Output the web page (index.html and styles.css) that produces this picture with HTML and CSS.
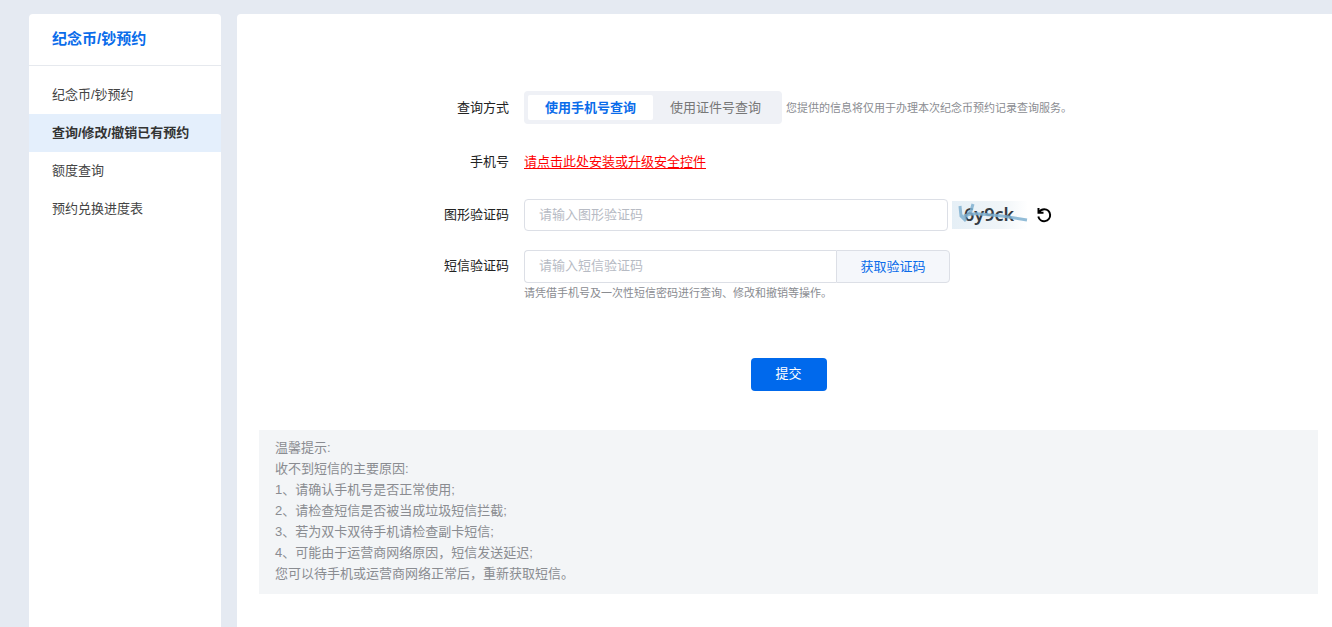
FILE: index.html
```html
<!DOCTYPE html>
<html lang="zh-CN">
<head>
<meta charset="utf-8">
<meta name="viewport" content="width=device-width, initial-scale=1">
<title>纪念币/钞预约</title>
<link rel="stylesheet" href="styles.css">
</head>
<body class="page">
<nav class="sidebar">
  <h1 class="sidebar-title">纪念币/钞预约</h1>
  <ul class="menu">
    <li><a class="menu-link" href="#book">纪念币/钞预约</a></li>
    <li><a class="menu-link is-active" href="#manage" aria-current="page">查询/修改/撤销已有预约</a></li>
    <li><a class="menu-link" href="#quota">额度查询</a></li>
    <li><a class="menu-link" href="#schedule">预约兑换进度表</a></li>
  </ul>
</nav>
<main class="content">
  <form class="query-form">
    <div class="row row-mode">
      <span class="label" id="mode-label">查询方式</span>
      <div class="field">
        <div class="segments" role="radiogroup" aria-labelledby="mode-label">
          <label class="segment"><input class="segment-input" type="radio" name="mode" checked><span class="segment-text">使用手机号查询</span></label>
          <label class="segment"><input class="segment-input" type="radio" name="mode"><span class="segment-text">使用证件号查询</span></label>
        </div>
        <span class="hint">您提供的信息将仅用于办理本次纪念币预约记录查询服务。</span>
      </div>
    </div>
    <div class="row row-phone">
      <span class="label">手机号</span>
      <div class="field"><a class="install-link" href="#install">请点击此处安装或升级安全控件</a></div>
    </div>
    <div class="row row-captcha">
      <label class="label" for="captcha">图形验证码</label>
      <div class="field">
        <input class="text-input" id="captcha" type="text" placeholder="请输入图形验证码">
        <svg class="captcha" viewBox="0 0 76 28" role="img" aria-label="图形验证码">
          <defs>
            <linearGradient id="fade"><stop offset="0" stop-color="#e5eff6"/><stop offset=".65" stop-color="#f0f5f8"/><stop offset="1" stop-color="#fff"/></linearGradient>
          </defs>
          <rect width="76" height="28" fill="url(#fade)"/>
          <text class="captcha-text" x="12" y="20">6y9ck</text>
          <path d="M8 5l1 10 5 5M21 3l-2 7-6 6M9 14l5 5M12 15q8-3 16-2l22 2 25 4" fill="none" stroke="#7fb0d0" stroke-width="3" opacity=".85"/>
        </svg>
        <button class="refresh" type="button" aria-label="刷新验证码">
          <svg class="refresh-icon" viewBox="0 0 16 16"><path d="M2.5 1v4.8h5M2.8 5.2C4.4 3.2 6 2.2 8.2 2.2a6 6 0 1 1-5.9 7.4" fill="none" stroke="#000" stroke-width="2"/></svg>
        </button>
      </div>
    </div>
    <div class="row row-sms">
      <label class="label" for="sms">短信验证码</label>
      <div class="sms-field">
        <div class="sms-group">
          <input class="text-input sms-input" id="sms" type="text" placeholder="请输入短信验证码">
          <button class="sms-button" type="button">获取验证码</button>
        </div>
        <p class="hint sms-hint">请凭借手机号及一次性短信密码进行查询、修改和撤销等操作。</p>
      </div>
    </div>
    <div class="actions"><button class="submit" type="submit">提交</button></div>
  </form>
  <section class="notice">
    <p>温馨提示:</p>
    <p>收不到短信的主要原因:</p>
    <p>1、请确认手机号是否正常使用;</p>
    <p>2、请检查短信是否被当成垃圾短信拦截;</p>
    <p>3、若为双卡双待手机请检查副卡短信;</p>
    <p>4、可能由于运营商网络原因，短信发送延迟;</p>
    <p>您可以待手机或运营商网络正常后，重新获取短信。</p>
  </section>
</main>
</body>
</html>
```

FILE: styles.css
```css
* { box-sizing: border-box; }

.page {
  display: flex;
  gap: 16px;
  min-height: 100vh;
  margin: 0;
  padding: 14px 0 0 29px;
  background: #e5eaf2;
  color: #222;
  font: 13px/20px "Liberation Sans", "Noto Sans CJK SC", sans-serif;
}

p { margin: 0; }
button, input { font: inherit; }
button { cursor: pointer; }

.sidebar {
  flex: 0 0 192px;
  background: #fff;
  border-radius: 4px 4px 0 0;
}
.sidebar-title {
  margin: 0;
  padding: 13px 23px 14px;
  border-bottom: 1px solid #e6e9ee;
  color: #0a6cea;
  font-size: 15px;
  line-height: 24px;
}
.menu {
  margin: 0;
  padding: 10px 0;
  list-style: none;
}
.menu-link {
  display: block;
  padding: 0 23px;
  color: #444;
  line-height: 38px;
  text-decoration: none;
}
.menu-link.is-active {
  background: #e4effc;
  color: #333;
  font-weight: bold;
}

.content {
  flex: 1;
  min-width: 0;
  padding: 77px 14px 33px 22px;
  background: #fff;
  border-radius: 4px 0 0 0;
}

.row {
  display: grid;
  grid-template-columns: 250px 1fr;
  column-gap: 15px;
  align-items: center;
}
.label { text-align: right; }
.field {
  display: flex;
  align-items: center;
  gap: 4px;
}
.hint {
  color: #8a8c91;
  font-size: 11px;
}

.segments {
  display: flex;
  padding: 4px;
  background: #eff1f6;
  border-radius: 4px;
}
.segment {
  position: relative;
  width: 125px;
  color: #777;
  line-height: 25px;
  text-align: center;
  cursor: pointer;
}
.segment-input {
  position: absolute;
  inset: 0;
  margin: 0;
  opacity: 0;
}
.segment-text {
  display: block;
  border-radius: 2px;
}
.segment-input:checked + .segment-text {
  background: #fff;
  color: #0a6cea;
  font-weight: bold;
}

.row-phone { margin-top: 28px; }
.install-link {
  color: #f00;
  text-underline-offset: 2px;
}

.row-captcha { margin-top: 27px; }
.text-input {
  width: 424px;
  height: 32px;
  padding: 0 14px 2px;
  background: #fff;
  border: 1px solid #dcdfe6;
  border-radius: 4px;
  color: #222;
}
.text-input::placeholder { color: #b7bbc4; }
.captcha {
  flex: none;
  width: 76px;
  height: 28px;
}
.captcha-text {
  fill: #343b42;
  font: 600 18px "Noto Sans", sans-serif;
}
.refresh {
  display: flex;
  margin-left: 4px;
  padding: 0;
  background: none;
  border: 0;
}
.refresh-icon {
  width: 16px;
  height: 16px;
}

.row-sms {
  align-items: start;
  margin-top: 19px;
  line-height: 32px;
}
.sms-group {
  display: flex;
  width: 426px;
  height: 33px;
}
.sms-input {
  flex: 1;
  min-width: 0;
  height: 33px;
  border-right: 0;
  border-radius: 4px 0 0 4px;
}
.sms-button {
  width: 114px;
  padding: 0;
  background: #f5f7fb;
  border: 1px solid #dcdfe6;
  border-radius: 0 4px 4px 0;
  color: #0a6cea;
  line-height: 20px;
}
.sms-hint { line-height: 20px; }

.actions {
  display: flex;
  justify-content: center;
  margin-top: 55px;
}
.submit {
  width: 76px;
  height: 33px;
  padding: 0 0 2px;
  background: #0069ec;
  border: 0;
  border-radius: 4px;
  color: #fff;
}

.notice {
  margin-top: 39px;
  padding: 7px 16px 10px;
  background: #f3f5f7;
  color: #8a8c91;
  line-height: 21px;
}
```
